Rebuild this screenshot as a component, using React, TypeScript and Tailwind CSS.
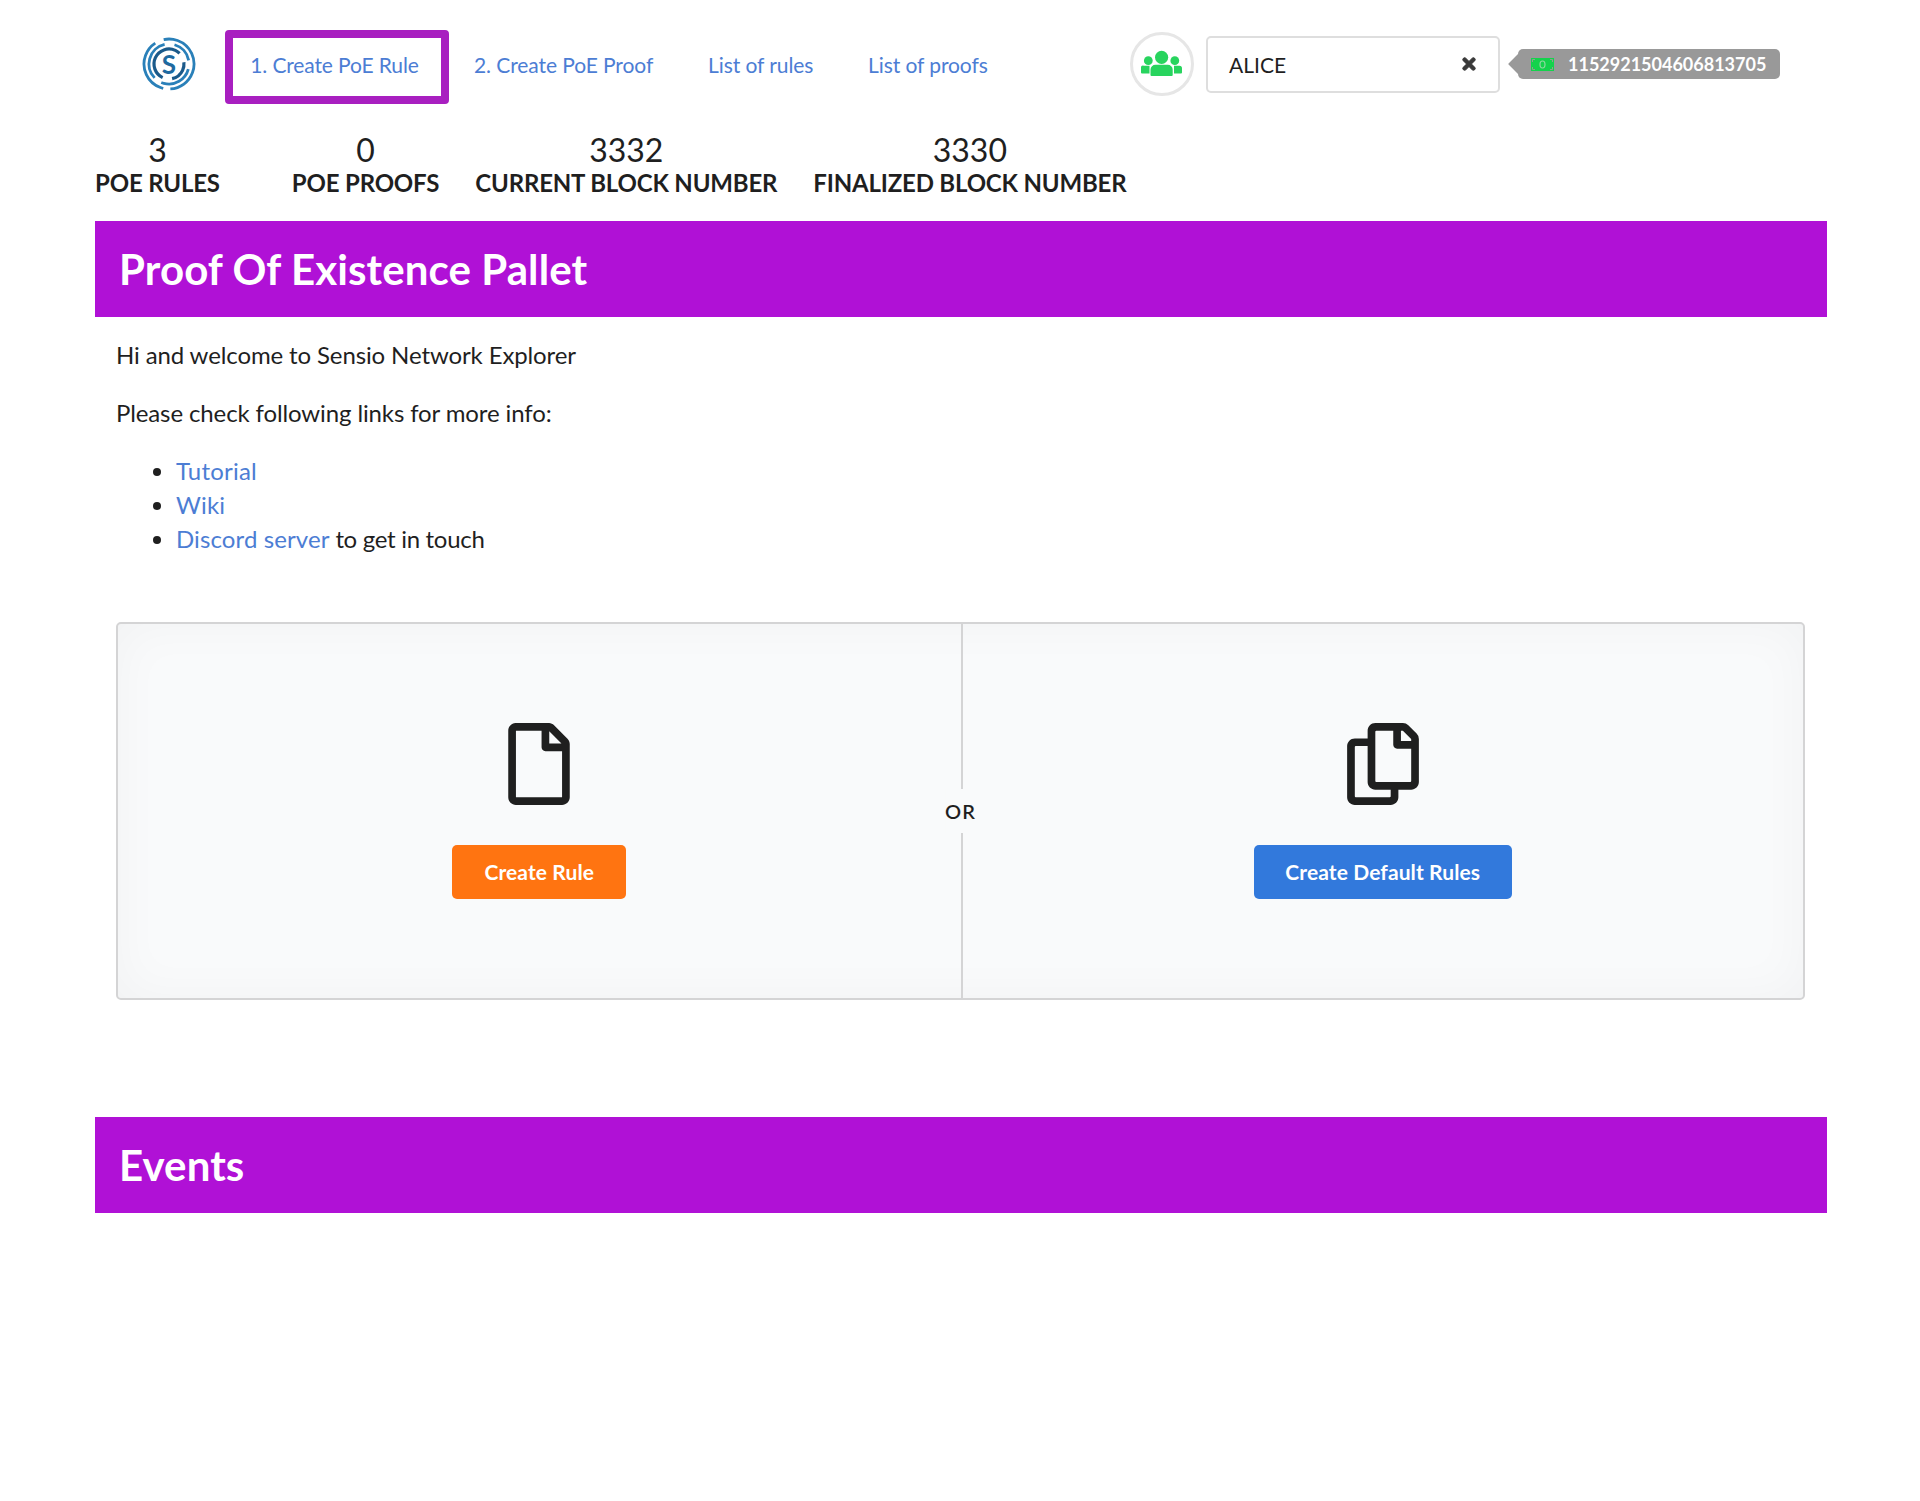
import { FaRegCopy, FaRegFile, FaTimes } from 'react-icons/fa';

const stats = [
  { value: '3', label: 'POE RULES', extra: 'mr-[36px]' },
  { value: '0', label: 'POE PROOFS', extra: '' },
  { value: '3332', label: 'CURRENT BLOCK NUMBER', extra: '' },
  { value: '3330', label: 'FINALIZED BLOCK NUMBER', extra: '' },
];

const navLinks = [
  { label: '2. Create PoE Proof', width: 'w-[234px]' },
  { label: 'List of rules', width: 'w-[160px]' },
  { label: 'List of proofs', width: 'w-[287px]' },
];

// r, dash pattern and rotation for each broken ring of the logo
const logoArcs = [
  { r: 25, color: '#2a80b9', width: 2.8, dash: '68 7 58 9 15 0', rotate: -70 },
  { r: 20, color: '#2a80b9', width: 2.8, dash: '34 8 42 10 22 10', rotate: 15 },
  { r: 15, color: '#1b5a8a', width: 3.2, dash: '52 10 22 10', rotate: 115 },
];

function Logo() {
  return (
    <svg width="56" height="56" viewBox="0 0 56 56" className="shrink-0">
      {logoArcs.map((arc) => (
        <circle
          key={arc.r}
          cx="28"
          cy="28"
          r={arc.r}
          fill="none"
          stroke={arc.color}
          strokeWidth={arc.width}
          strokeDasharray={arc.dash}
          transform={`rotate(${arc.rotate} 28 28)`}
        />
      ))}
      <text x="28" y="37.500" textAnchor="middle" fontSize="26" fontWeight="700" fill="#1f6aa0" fontFamily="Lato, sans-serif">
        S
      </text>
    </svg>
  );
}

function UsersIcon() {
  return (
    <svg width="42" height="28" viewBox="0 0 42 28" fill="#28d45e">
      <circle cx="20.6" cy="7.3" r="6.6" />
      <path d="M14.5 14.7h12.2a5 5 0 0 1 5 5V25a1 1 0 0 1-1 1H10.5a1 1 0 0 1-1-1v-5.300a5 5 0 0 1 5-5z" />
      <circle cx="7.3" cy="10.700" r="4.400" />
      <circle cx="33.800" cy="10.700" r="4.400" />
      <path d="M3 15.800h5.500v7.800H1a1 1 0 0 1-1-1v-4.800a2 2 0 0 1 3-2z" />
      <path d="M33 15.800h5.500a2.500 2.500 0 0 1 2.500 2.500v4.300a1 1 0 0 1-1 1h-7z" />
    </svg>
  );
}

function MoneyIcon() {
  return (
    <svg width="23" height="13" viewBox="0 0 23 13" className="relative shrink-0">
      <rect width="23" height="13" fill="#14d24c" />
      <path d="M1.500 4V1.500H4M19 1.500h2.500V4M1.500 9v2.500H4M19 11.500h2.500V9" fill="none" stroke="#8fa08f" strokeWidth="1" />
      <ellipse cx="11.500" cy="6.500" rx="2.500" ry="3.500" fill="none" stroke="#8fd8a0" strokeWidth="1.200" />
    </svg>
  );
}

function SectionHeader({ title }: { title: string }) {
  return (
    <div className="h-[96px] bg-[#b011d6] pl-6 flex items-center">
      <h2 className="text-[42px] leading-none font-bold text-white tracking-[0.1px]">{title}</h2>
    </div>
  );
}

export default function App() {
  return (
    <div className="min-h-[1501px] bg-white pl-[95px] pr-[93px] font-['Lato',sans-serif] text-[#1f1f1f]">
      <nav className="h-[129px] flex items-center pb-[1px]">
        <div className="w-[130px] pl-[46px]">
          <Logo />
        </div>
        <a className="mt-[5px] pb-[4px] pr-[5px] h-[74px] w-[224px] flex items-center justify-center border-[8px] border-[#a81fc0] rounded-[4px] text-[21px] tracking-[-0.12px] text-[#4c7dd4]">
          1. Create PoE Rule
        </a>
        {navLinks.map((link) => (
          <a key={link.label} className={`${link.width} pl-[25px] pt-[2px] text-[21px] tracking-[-0.08px] text-[#4c7dd4]`}>
            {link.label}
          </a>
        ))}
        <div className="w-[64px] h-[64px] rounded-full border-[3px] border-[#e6e6e6] flex items-center justify-center">
          <UsersIcon />
        </div>
        <div className="ml-[12px] w-[294px] h-[57px] border-2 border-[#dedede] rounded-[5px] pl-[21px] pr-[20px] flex items-center justify-between">
          <span className="text-[21px] pt-[2px]">ALICE</span>
          <FaTimes className="text-[#3a3a3a] text-[18px] stroke-[30]" />
        </div>
        <div className="relative ml-[18px] w-[262px] h-[30px] bg-[#999999] rounded-[5px] flex items-center pl-[13px] gap-[14px] font-bold text-white text-[18px]">
          <span className="absolute -left-[7px] top-[8px] w-[14px] h-[14px] bg-[#999999] rotate-45" />
          <MoneyIcon />
          <span className="relative">1152921504606813705</span>
        </div>
      </nav>

      <div className="h-[92px] flex gap-[36px] items-start">
        {stats.map((stat) => (
          <div key={stat.label} className={`flex flex-col items-center ${stat.extra}`}>
            <div className="text-[32px] leading-[40px] pt-[1px] -mb-[1px] font-normal">{stat.value}</div>
            <div className="text-[24px] leading-[28px] font-bold tracking-[-0.18px]">{stat.label}</div>
          </div>
        ))}
      </div>

      <SectionHeader title="Proof Of Existence Pallet" />

      <div className="pl-[21px] pr-[22px]">
        <p className="mt-[21px] text-[24px] leading-[34px] tracking-[-0.12px]">Hi and welcome to Sensio Network Explorer</p>
        <p className="mt-[24px] text-[24px] leading-[34px] tracking-[-0.12px]">Please check following links for more info:</p>
        <ul className="mt-[24px] list-disc pl-[60px] text-[24px] leading-[34px] tracking-[-0.12px]">
          <li><a className="text-[#4c7dd4] tracking-[0.2px]">Tutorial</a></li>
          <li><a className="text-[#4c7dd4] tracking-[0.2px]">Wiki</a></li>
          <li>
            <a className="text-[#4c7dd4] tracking-[0.1px]">Discord server</a>
            <span className="tracking-[-0.3px]"> to get in touch</span>
          </li>
        </ul>

        <div className="mt-[66px] h-[378px] border-2 border-[#d4d4d5] rounded-[5px] bg-[#f9fafb] shadow-[inset_0_0_50px_rgba(0,0,0,0.035)] grid grid-cols-2 relative">
          <div className="flex flex-col items-center pt-[99px]">
            <FaRegFile className="text-[#1f1f1f] text-[82px]" />
            <button className="mt-[40px] h-[54px] w-[174px] rounded-[5px] bg-[#ff7411] text-white font-bold text-[21px] tracking-[0.1px]">
              Create Rule
            </button>
          </div>
          <div className="flex flex-col items-center pt-[99px] border-l-2 border-[#d4d4d5]">
            <FaRegCopy className="text-[#1f1f1f] text-[82px]" />
            <button className="mt-[40px] h-[54px] w-[258px] rounded-[5px] bg-[#3279dc] text-white font-bold text-[21px] tracking-[0.1px]">
              Create Default Rules
            </button>
          </div>
          <span className="absolute left-1/2 top-1/2 -translate-x-1/2 -translate-y-1/2 bg-[#f9fafb] py-[10px] text-[20px] font-semibold leading-[24px] tracking-[1px]">
            OR
          </span>
        </div>
      </div>

      <div className="mt-[117px]">
        <SectionHeader title="Events" />
      </div>
    </div>
  );
}
